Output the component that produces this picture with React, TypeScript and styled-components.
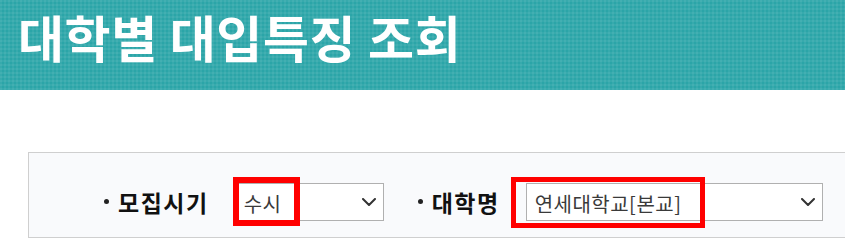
import React from "react";
import styled, { createGlobalStyle } from "styled-components";

const Global = createGlobalStyle`
  html, body { margin: 0; padding: 0; background: #fff; overflow: hidden; }
  body { font-family: "Noto Sans CJK KR", "Noto Sans", sans-serif; }
`;

const Header = styled.header`
  height: 90px;
  display: flex;
  align-items: center;
  padding-left: 18px;
  background-color: #2ba5a8;
  background-image:
    repeating-linear-gradient(90deg, rgba(255,255,255,0.06) 0 2px, transparent 2px 4px),
    repeating-linear-gradient(0deg, rgba(255,255,255,0.06) 0 2px, transparent 2px 4px);
`;

const Title = styled.h1`
  margin: 0;
  margin-top: -18px;
  font-size: 50px;
  font-weight: 700;
  color: #fff;
  letter-spacing: 0.6px;
  line-height: 1;
`;

const Panel = styled.div`
  margin: 62px -1px 0 28px;
  height: 84px;
  border: 1px solid #cfcfcf;
  background: #f9fafc;
  display: flex;
  align-items: center;
  padding-left: 75px;
`;

const Inner = styled.div`
  display: flex;
  align-items: center;
  gap: 34px;
  margin-top: 13px;
`;

const Field = styled.div`
  display: flex;
  align-items: center;
  gap: 26px;
`;

const Label = styled.span`
  font-size: 23px;
  font-weight: 700;
  letter-spacing: 1.5px;
  color: #111;
  white-space: nowrap;
  display: flex;
  align-items: center;
`;

const Dot = styled.span`
  display: inline-block;
  width: 5px;
  height: 5px;
  border-radius: 50%;
  background: #222;
  margin: 0 9px 0 0;
`;

const SelectWrap = styled.div`
  position: relative;
`;

const SelectBox = styled.div<{ $w: number }>`
  width: ${(p) => p.$w}px;
  height: 38px;
  box-sizing: border-box;
  border: 1px solid #b0b0b0;
  background: #fff;
  display: flex;
  align-items: center;
  justify-content: space-between;
  padding: 0 7px 0 8px;
  font-size: 20px;
  letter-spacing: 0.5px;
  color: #3a3a3a;
`;

const Value = styled.span`
  padding-top: 3px;
`;

const Highlight = styled.div<{ $l: number; $t: number; $w: number; $h: number; $b: number }>`
  position: absolute;
  left: ${(p) => p.$l}px;
  top: ${(p) => p.$t}px;
  width: ${(p) => p.$w}px;
  height: ${(p) => p.$h}px;
  box-sizing: border-box;
  border: ${(p) => p.$b}px solid #f00;
  pointer-events: none;
`;

const Chevron = () => (
  <svg width="14" height="8" viewBox="0 0 14 8" fill="none">
    <path d="M1 1 L7 7 L13 1" stroke="#333" strokeWidth="2" strokeLinecap="round" strokeLinejoin="round" />
  </svg>
);

export default function App() {
  return (
    <>
      <Global />
      <Header>
        <Title>대학별 대입특징 조회</Title>
      </Header>
      <Panel>
        <Inner>
          <Field>
            <Label>
              <Dot />
              모집시기
            </Label>
            <SelectWrap>
              <SelectBox $w={149}>
                <Value>수시</Value>
                <Chevron />
              </SelectBox>
              <Highlight $l={-2} $t={-6} $w={67} $h={49} $b={6} />
            </SelectWrap>
          </Field>
          <Field>
            <Label>
              <Dot />
              대학명
            </Label>
            <SelectWrap>
              <SelectBox $w={297}>
                <Value>연세대학교[본교]</Value>
                <Chevron />
              </SelectBox>
              <Highlight $l={-15} $t={-6} $w={194} $h={51} $b={5} />
            </SelectWrap>
          </Field>
        </Inner>
      </Panel>
    </>
  );
}
